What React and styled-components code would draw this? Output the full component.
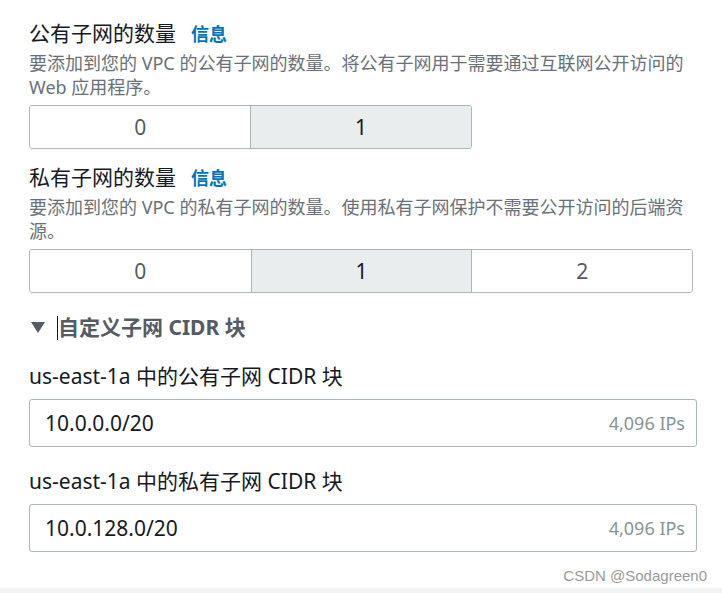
import React from "react";
import styled, { createGlobalStyle } from "styled-components";

const GlobalStyle = createGlobalStyle`
  html, body {
    margin: 0;
    padding: 0;
    background: #f2f3f3;
  }
  body {
    font-family: "Noto Sans", "Noto Sans CJK SC", sans-serif;
    color: #16191f;
  }
  * { box-sizing: border-box; }
`;

const Page = styled.div`
  position: relative;
  width: 722px;
  height: 593px;
  overflow: hidden;
`;

const Panel = styled.div`
  background: #ffffff;
  height: 588px;
  padding: 17px 25px 0 29px;
  display: flex;
  flex-direction: column;
`;

const Field = styled.div`
  display: flex;
  flex-direction: column;
  margin-top: ${(p) => p.$gap || 0}px;
`;

const TitleRow = styled.div`
  display: flex;
  align-items: baseline;
  gap: 15px;
  line-height: 33px;
`;

const Title = styled.span`
  font-size: 21px;
  color: #16191f;
`;

const InfoLink = styled.a`
  font-size: 18px;
  font-weight: 700;
  color: #0073bb;
  text-decoration: none;
`;

const Description = styled.div`
  font-size: 18px;
  line-height: 24px;
  color: #687078;
  margin-bottom: 6px;
`;

const Segmented = styled.div`
  display: grid;
  grid-template-columns: repeat(${(p) => p.$count}, 1fr);
  width: calc((100% - 4px) * ${(p) => p.$count} / 3);
  height: 44px;
  border: 1px solid #aab7b8;
  border-radius: 3px;
  overflow: hidden;
`;

const Segment = styled.button`
  border: none;
  border-left: ${(p) => (p.$first ? "none" : "1px solid #aab7b8")};
  background: ${(p) => (p.$selected ? "#eaeded" : "#ffffff")};
  color: ${(p) => (p.$selected ? "#16191f" : "#545b64")};
  font-family: "Noto Sans", "Noto Sans CJK SC", sans-serif;
  font-size: 21px;
  padding: 0;
  cursor: pointer;
  display: flex;
  align-items: center;
  justify-content: center;
`;

const ExpandHeader = styled.div`
  display: flex;
  align-items: center;
  margin-top: 18px;
  height: 33px;
  color: #545b64;
`;

const Caret = styled.svg`
  width: 14px;
  height: 11px;
  margin-left: 2px;
  margin-right: 12px;
  flex: none;
`;

const TextCursor = styled.span`
  width: 1px;
  height: 24px;
  background: #16191f;
`;

const ExpandTitle = styled.span`
  font-size: 21px;
  font-weight: 700;
  color: #545b64;
  line-height: 33px;
`;

const InputLabel = styled.div`
  font-size: 21px;
  line-height: 33px;
  color: #16191f;
  margin-bottom: 6px;
`;

const InputBox = styled.div`
  display: flex;
  align-items: center;
  justify-content: space-between;
  height: 48px;
  border: 1px solid #aab7b8;
  border-radius: 3px;
  padding: 0 11px 0 15px;
  background: #ffffff;
`;

const InputValue = styled.span`
  font-size: 21px;
  color: #16191f;
`;

const IpCount = styled.span`
  font-size: 18px;
  color: #879596;
`;

const Watermark = styled.div`
  position: absolute;
  right: 15px;
  bottom: 9px;
  font-family: "Liberation Sans", Arial, sans-serif;
  font-size: 15px;
  color: #9a9a9a;
`;

function SegmentedControl({ options, selected }) {
  return (
    <Segmented $count={options.length}>
      {options.map((o, i) => (
        <Segment key={o} $first={i === 0} $selected={o === selected}>
          {o}
        </Segment>
      ))}
    </Segmented>
  );
}

function CidrField({ label, value, gap }) {
  return (
    <Field $gap={gap}>
      <InputLabel>{label}</InputLabel>
      <InputBox>
        <InputValue>{value}</InputValue>
        <IpCount>4,096 IPs</IpCount>
      </InputBox>
    </Field>
  );
}

export default function App() {
  return (
    <>
      <GlobalStyle />
      <Page>
        <Panel>
          <Field>
            <TitleRow>
              <Title>公有子网的数量</Title>
              <InfoLink>信息</InfoLink>
            </TitleRow>
            <Description>
              要添加到您的 VPC 的公有子网的数量。将公有子网用于需要通过互联网公开访问的 Web 应用程序。
            </Description>
            <SegmentedControl options={["0", "1"]} selected="1" />
          </Field>
          <Field $gap={12}>
            <TitleRow>
              <Title>私有子网的数量</Title>
              <InfoLink>信息</InfoLink>
            </TitleRow>
            <Description>
              要添加到您的 VPC 的私有子网的数量。使用私有子网保护不需要公开访问的后端资源。
            </Description>
            <SegmentedControl options={["0", "1", "2"]} selected="1" />
          </Field>
          <ExpandHeader>
            <Caret viewBox="0 0 14 11">
              <polygon points="0,0 14,0 7,11" fill="#545b64" />
            </Caret>
            <TextCursor />
            <ExpandTitle>自定义子网 CIDR 块</ExpandTitle>
          </ExpandHeader>
          <CidrField gap={16} label="us-east-1a 中的公有子网 CIDR 块" value="10.0.0.0/20" />
          <CidrField gap={18} label="us-east-1a 中的私有子网 CIDR 块" value="10.0.128.0/20" />
        </Panel>
        <Watermark>CSDN @Sodagreen0</Watermark>
      </Page>
    </>
  );
}
